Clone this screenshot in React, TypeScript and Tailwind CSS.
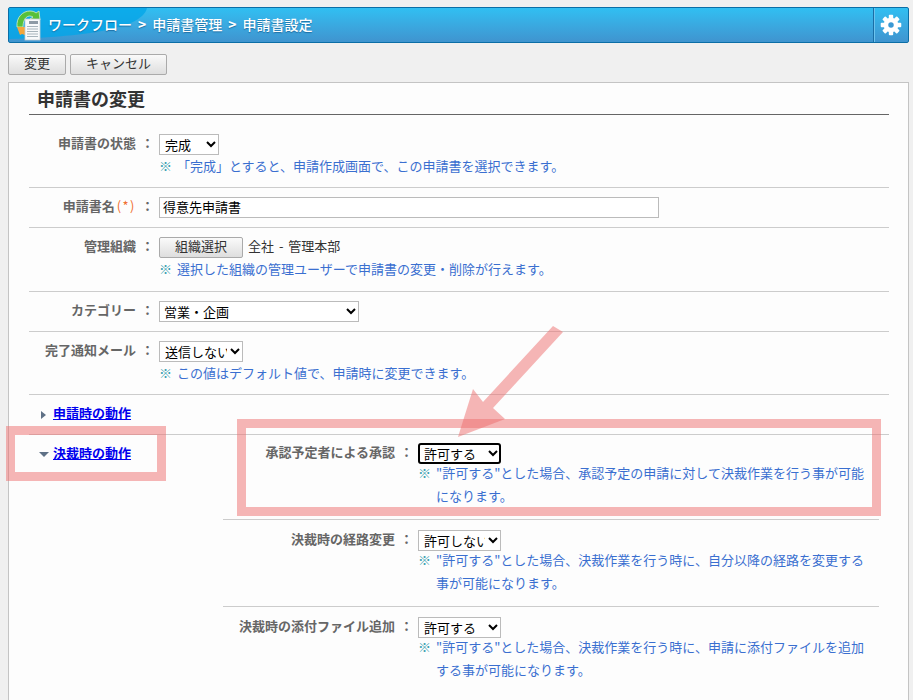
import type { ReactNode } from 'react';

const font = "font-['Noto_Sans_CJK_JP','Liberation_Sans',sans-serif]";

// ワークフローのロゴ
function WorkflowLogo() {
  return (
    <svg width="26" height="32" viewBox="0 0 26 32" className="shrink-0">
      <path d="M2 18 C1 8 8 2 15 2 C18 2 20 3 21 4 L24 2 L25 11 L15 10 L18 8 C13 5 8 9 8 18 Z" fill="#58c03a" stroke="#d4f0c4" strokeWidth="0.8" />
      <path d="M2 18 L10 18 L10 26 L7 25 L5 26 Z" fill="#f4a63c" />
      <rect x="10" y="10" width="15" height="21" fill="#f8f9fb" stroke="#c4ccd4" strokeWidth="0.8" />
      <rect x="14" y="12" width="9" height="3" fill="#8e9aa6" />
      <path d="M12 17.5H23M12 20H23M12 22.5H23M12 25H23M12 27.5H23" stroke="#a8b4bc" strokeWidth="1" />
    </svg>
  );
}

function GearIcon() {
  return (
    <svg width="22" height="22" viewBox="0 0 24 24">
      <g fill="#fff">
        <circle cx="12" cy="12" r="8" />
        {[0, 45, 90, 135, 180, 225, 270, 315].map((a) => (
          <rect key={a} x="9.6" y="0.8" width="4.8" height="6" rx="1" transform={`rotate(${a} 12 12)`} />
        ))}
      </g>
      <circle cx="12" cy="12" r="3" fill="#3a98d4" />
    </svg>
  );
}

function Note({ children }: { children: ReactNode }) {
  return (
    <div className="flex text-[13px] leading-[23px] text-[#3a6fd0]">
      <span className="w-[18px] shrink-0 text-[#38a0b0]">※</span>
      <span>{children}</span>
    </div>
  );
}

function Label({ children, width }: { children: ReactNode; width: string }) {
  return (
    <div className={`flex h-[21px] shrink-0 items-center justify-end pb-[4px] font-bold text-[#666] ${width}`}>
      <span>{children}</span>
      <span className="w-[23px] shrink-0 text-center">：</span>
    </div>
  );
}

function Row({ label, children, height }: { label: ReactNode; children: ReactNode; height: string }) {
  return (
    <div className={`flex border-b border-[#ccc] pt-[9px] ${height}`}>
      <Label width="w-[130px]">{label}</Label>
      <div>{children}</div>
    </div>
  );
}

function SubRow({ label, value, children, first, last }: { label: string; value: string; children: ReactNode; first?: boolean; last?: boolean }) {
  return (
    <div className={`flex ${first ? 'h-[85px] pt-[8px]' : 'h-[87px] pt-[10px]'} ${last ? '' : 'border-b border-[#ccc]'}`}>
      <Label width="w-[195px]">{label}</Label>
      <div className="w-[450px]">
        <select
          defaultValue={value}
          className={`block h-[21px] w-[83px] border-0 bg-white pb-[2px] pl-[2px] text-[13px] text-black ${first ? 'rounded-[3px] shadow-[inset_0_0_0_2px_#000]' : 'shadow-[inset_0_0_0_1px_#bbb]'}`}
        >
          <option>許可する</option>
          <option>許可しない</option>
        </select>
        <div className="mt-[-3px]">{children}</div>
      </div>
    </div>
  );
}

export default function App() {
  return (
    <div className={`relative h-[700px] w-[913px] overflow-hidden bg-[#f0f0f0] text-[13px] leading-[21px] text-[#333] ${font}`}>
      <div className="px-[8px] pt-[7px]">
        {/* ヘッダー */}
        <div className="relative flex h-[36px] w-[901px] items-center overflow-hidden rounded-[2px] border border-[#0b6ea6] bg-gradient-to-b from-[#30bff2] to-[#3f94cf]">
          <svg className="absolute inset-0 h-full w-[150px]" viewBox="0 0 150 34" preserveAspectRatio="none">
            <path d="M0 0H138C134 16 100 28 0 31Z" fill="#00a6e8" fillOpacity="0.75" />
          </svg>
          <div className="relative ml-[6px] flex flex-1 items-center gap-[7px]">
            <WorkflowLogo />
            <span className="pb-[2px] text-[14px] font-medium text-white [text-shadow:0_1px_1px_rgba(0,60,110,0.5)]">
              ワークフロー<span className="mx-[6px] font-bold">&gt;</span>申請書管理<span className="mx-[6px] font-bold">&gt;</span>申請書設定
            </span>
          </div>
          <div className="relative flex h-full w-[35px] items-center justify-center border-l border-l-[#1a6ea6] shadow-[inset_1px_0_0_#6cc4ee]">
            <GearIcon />
          </div>
        </div>

        {/* ボタン */}
        <div className="mt-[11px] flex gap-[4px]">
          <button className="h-[21px] w-[58px] rounded-[2px] border border-[#aaa] bg-gradient-to-b from-[#fafafa] to-[#dedede] pb-[4px] text-[13px] leading-none text-[#333]">
            変更
          </button>
          <button className="h-[21px] w-[97px] rounded-[2px] border border-[#aaa] bg-gradient-to-b from-[#fafafa] to-[#dedede] pb-[4px] text-[13px] leading-none text-[#333]">
            キャンセル
          </button>
        </div>

        {/* 本体 */}
        <div className="mt-[7px] h-[640px] w-[901px] border border-[#c4c4c4] bg-[#fdfdfd] pl-[20px] pr-[19px]">
          <h2 className="h-[32px] border-b border-[#666] pl-[8px] pt-[4px] text-[18px] leading-[22px] font-bold text-[#333]">
            申請書の変更
          </h2>

          <Row label="申請書の状態" height="h-[73px] !pt-[19px]">
            <select defaultValue="完成" className="block h-[21px] w-[60px] border-0 bg-white pb-[2px] pl-[2px] text-[13px] text-black shadow-[inset_0_0_0_1px_#bbb]">
              <option>完成</option>
            </select>
            <div className="mt-[-1px]">
              <Note>「完成」とすると、申請作成画面で、この申請書を選択できます。</Note>
            </div>
          </Row>

          <Row
            label={
              <>
                申請書名<span className="ml-[2px] font-normal tracking-[1.5px] text-[#f07030]">(*)</span>
              </>
            }
            height="h-[40px]"
          >
            <input
              defaultValue="得意先申請書"
              className="block h-[21px] w-[500px] border border-[#bbb] bg-white px-[3px] pb-[3px] text-[13px] text-black"
            />
          </Row>

          <Row label="管理組織" height="h-[64px]">
            <div className="flex h-[21px] items-start gap-[5px]">
              <button className="h-[21px] w-[84px] rounded-[2px] border border-[#aaa] bg-gradient-to-b from-[#fafafa] to-[#dedede] pb-[4px] text-[13px] leading-none text-[#333]">
                組織選択
              </button>
              <span className="leading-[18px] text-[#333] [word-spacing:2px]">全社 - 管理本部</span>
            </div>
            <div className="mt-[-1px]">
              <Note>選択した組織の管理ユーザーで申請書の変更・削除が行えます。</Note>
            </div>
          </Row>

          <Row label="カテゴリー" height="h-[40px]">
            <select defaultValue="営業・企画" className="block h-[21px] w-[200px] border-0 bg-white pb-[2px] pl-[1px] text-[13px] text-black shadow-[inset_0_0_0_1px_#bbb]">
              <option>営業・企画</option>
            </select>
          </Row>

          <Row label="完了通知メール" height="h-[63px]">
            <select defaultValue="送信しない" className="block h-[21px] w-[84px] border-0 bg-white pb-[2px] pl-[2px] text-[13px] text-black shadow-[inset_0_0_0_1px_#bbb]">
              <option>送信しない</option>
            </select>
            <div className="mt-[-1px]">
              <Note>この値はデフォルト値で、申請時に変更できます。</Note>
            </div>
          </Row>

          {/* 申請時の動作 */}
          <div className="flex h-[40px] items-center gap-[7px] border-b border-[#ccc] pl-[12px]">
            <span className="h-0 w-0 border-y-[4px] border-l-[5px] border-y-transparent border-l-[#5f7186]" />
            <a href="#" className="pb-[4px] font-bold text-[#0000ee] underline">申請時の動作</a>
          </div>

          {/* 決裁時の動作 */}
          <div className="flex">
            <div className="flex h-[38px] w-[194px] shrink-0 items-center gap-[4px] pl-[10px]">
              <span className="h-0 w-0 border-x-[5px] border-t-[5px] border-x-transparent border-t-[#5f7186]" />
              <a href="#" className="pb-[4px] font-bold text-[#0000ee] underline">決裁時の動作</a>
            </div>
            <div className="w-[656px]">
              <SubRow label="承認予定者による承認" value="許可する" first>
                <Note>"許可する"とした場合、承認予定の申請に対して決裁作業を行う事が可能になります。</Note>
              </SubRow>
              <SubRow label="決裁時の経路変更" value="許可しない">
                <Note>"許可する"とした場合、決裁作業を行う時に、自分以降の経路を変更する事が可能になります。</Note>
              </SubRow>
              <SubRow label="決裁時の添付ファイル追加" value="許可する" last>
                <Note>"許可する"とした場合、決裁作業を行う時に、申請に添付ファイルを追加する事が可能になります。</Note>
              </SubRow>
            </div>
          </div>
        </div>
      </div>

      {/* 注釈 */}
      <div className="absolute left-[6px] top-[426px] h-[55px] w-[160px] border-[9px] border-[rgba(238,110,110,0.5)]" />
      <div className="absolute left-[237px] top-[419px] h-[97px] w-[644px] border-[9px] border-[rgba(238,110,110,0.5)]" />
      <svg className="absolute left-[450px] top-[320px]" width="120" height="125" viewBox="450 320 120 125">
        <path d="M553 326L563 332L493 408L505 419L458 437L473 389L483 402Z" fill="rgba(238,110,110,0.5)" />
      </svg>
    </div>
  );
}
